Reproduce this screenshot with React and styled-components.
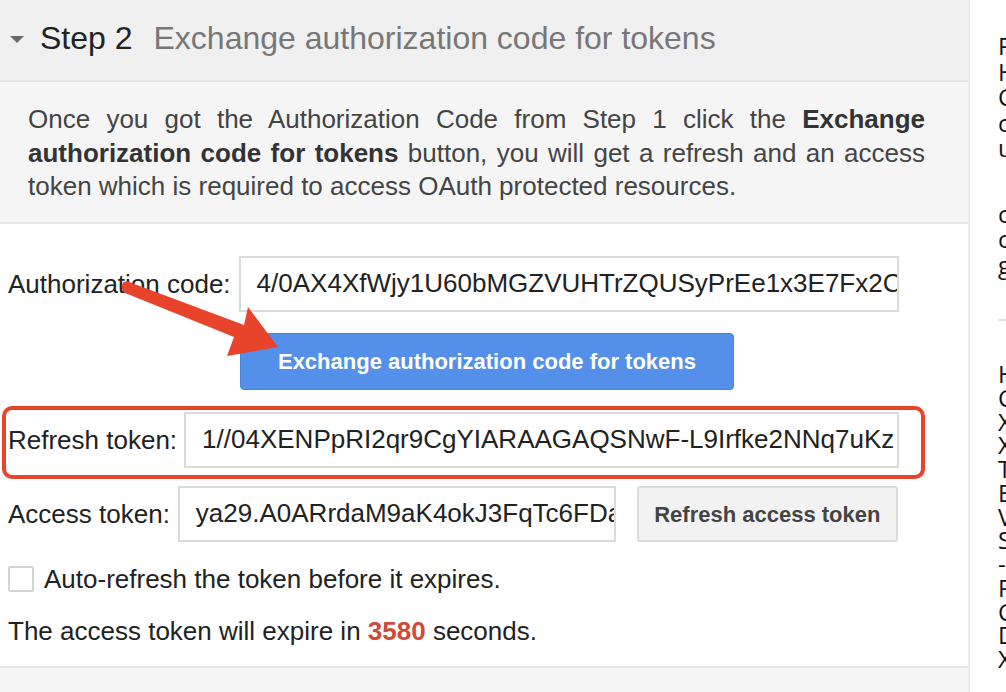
import React from "react";
import styled, { createGlobalStyle } from "styled-components";

const Global = createGlobalStyle`
  html, body { margin: 0; padding: 0; overflow: hidden; background: #fff; }
  body { font-family: "Liberation Sans", Arial, sans-serif; }
  * { box-sizing: border-box; }
`;

const Page = styled.div`
  display: flex;
  width: 1006px;
  height: 692px;
  overflow: hidden;
`;

const Main = styled.div`
  position: relative;
  flex: 0 0 968px;
  display: flex;
  flex-direction: column;
  background: #f5f5f5;
`;

const Header = styled.div`
  display: flex;
  align-items: center;
  height: 82px;
  padding: 0 0 4px 10px;
  background: #f0f0f0;
  border-bottom: 2px solid #e3e3e3;
`;

const Caret = styled.span`
  width: 0;
  height: 0;
  border-left: 7px solid transparent;
  border-right: 7px solid transparent;
  border-top: 7px solid #6a6a6a;
  margin-right: 16px;
  margin-top: 2px;
`;

const StepNo = styled.span`
  font-size: 32px;
  color: #222;
`;

const StepTitle = styled.span`
  font-size: 32px;
  color: #777;
  margin-left: 21px;
`;

const Description = styled.p`
  margin: 0;
  padding: 21px 43px 18px 28px;
  background: #f5f5f5;
  border-bottom: 2px solid #e6e6e6;
  font-size: 26px;
  line-height: 33.5px;
  color: #444;
  text-align: justify;
  b { color: #333; }
`;

const Content = styled.div`
  display: flex;
  flex-direction: column;
  align-items: flex-start;
  background: #fff;
  padding: 32px 0 0 8px;
  height: 444px;
  border-bottom: 2px solid #e3e3e3;
`;

const Row = styled.div`
  display: flex;
  align-items: center;
  gap: ${(p) => p.$gap || 10}px;
  margin-top: ${(p) => p.$mt || 0}px;
`;

const Label = styled.span`
  font-size: 26px;
  line-height: 30px;
  color: #222;
  white-space: nowrap;
`;

const TokenInput = styled.div`
  width: ${(p) => p.$w}px;
  height: 56px;
  border: 2px solid #dadada;
  background: #fff;
  padding-left: 16px;
  display: flex;
  align-items: center;
  font-size: 26px;
  color: #222;
  white-space: nowrap;
  overflow: hidden;
`;

const PrimaryButton = styled.button`
  display: block;
  margin: 21px 0 0 232px;
  width: 494px;
  height: 57px;
  background: #5490ea;
  border: 1px solid #4585e2;
  border-radius: 4px;
  color: #fff;
  font-family: "Liberation Sans", Arial, sans-serif;
  font-weight: bold;
  font-size: 22px;
  padding: 2px 0 0;
`;

const SecondaryButton = styled.button`
  width: 261px;
  height: 56px;
  margin-left: ${(p) => p.$ml || 0}px;
  background: #f2f2f2;
  border: 2px solid #dcdcdc;
  border-radius: 3px;
  color: #444;
  font-family: "Liberation Sans", Arial, sans-serif;
  font-weight: bold;
  font-size: 22px;
  padding: 2px 0 0;
`;

const Highlight = styled.div`
  position: relative;
  margin-top: 22px;
`;

const RedFrame = styled.div`
  position: absolute;
  left: -6px;
  top: -6px;
  width: 923px;
  height: 73px;
  border: 4px solid #e8442c;
  border-radius: 10px;
  pointer-events: none;
`;

const Checkbox = styled.span`
  flex: 0 0 26px;
  width: 26px;
  height: 26px;
  border: 2px solid #d4d4d4;
  border-radius: 2px;
  background: #fff;
`;

const Expire = styled.p`
  margin: 22px 0 0;
  font-size: 26px;
  line-height: 30px;
  color: #222;
  b { color: #d14a36; }
`;

const Arrow = styled.svg`
  position: absolute;
  left: 0;
  top: 0;
  pointer-events: none;
`;

const Sidebar = styled.div`
  flex: 1;
  border-left: 2px solid #ececec;
  padding: 33px 0 0 28px;
  font-family: "Open Sans", "Liberation Sans", sans-serif;
  font-size: 24px;
  color: #111;
  white-space: nowrap;
  overflow: hidden;
`;

const LogBlock = styled.div`
  line-height: ${(p) => p.$lh}px;
  margin-top: ${(p) => p.$mt || 0}px;
`;

const Divider = styled.div`
  height: 2px;
  background: #e2e2e2;
  margin-top: ${(p) => p.$mt}px;
  width: 40px;
`;

export default function App() {
  return (
    <>
      <Global />
      <Page>
        <Main>
          <Header>
            <Caret />
            <StepNo>Step 2</StepNo>
            <StepTitle>Exchange authorization code for tokens</StepTitle>
          </Header>
          <Description>
            Once you got the Authorization Code from Step 1 click the{" "}
            <b>Exchange authorization code for tokens</b> button, you will get a
            refresh and an access token which is required to access OAuth
            protected resources.
          </Description>
          <Content>
            <Row $gap={8}>
              <Label>Authorization code:</Label>
              <TokenInput $w={660}>4/0AX4XfWjy1U60bMGZVUHTrZQUSyPrEe1x3E7Fx2C</TokenInput>
            </Row>
            <PrimaryButton>Exchange authorization code for tokens</PrimaryButton>
            <Highlight>
              <Row $gap={7}>
                <Label>Refresh token:</Label>
                <TokenInput $w={715}>1//04XENPpRI2qr9CgYIARAAGAQSNwF-L9Irfke2NNq7uKz</TokenInput>
              </Row>
              <RedFrame />
            </Highlight>
            <Row $gap={8} $mt={18}>
              <Label>Access token:</Label>
              <TokenInput $w={438}>ya29.A0ARrdaM9aK4okJ3FqTc6FDa</TokenInput>
              <SecondaryButton $ml={13}>Refresh access token</SecondaryButton>
            </Row>
            <Row $gap={10} $mt={22}>
              <Checkbox />
              <Label>Auto-refresh the token before it expires.</Label>
            </Row>
            <Expire>
              The access token will expire in <b>3580</b> seconds.
            </Expire>
          </Content>
          <Arrow width="968" height="692" viewBox="0 0 968 692">
            <path
              d="M122 285 Q123 280 129 282 L244 325 L248 307 L278 347 L227 356 L234 337 L125 293 Q121 290 122 285 Z"
              fill="#e8442c"
            />
          </Arrow>
        </Main>
        <Sidebar>
          <LogBlock $lh={25.5}>
            <div>POST /token HTTP/1.1</div>
            <div>Host: oauth2.googleapis.com</div>
            <div>Content-length: 277</div>
            <div>content-type: application/x-www-form-urlencoded</div>
            <div>user-agent: google-oauth-playground</div>
          </LogBlock>
          <LogBlock $lh={25.5} $mt={40}>
            <div>code=4/0AX4XfWjy1U60bMGZVUHTrZQUSyPrEe1x3E7Fx2C</div>
            <div>client_id=407408718192.apps.googleusercontent.com</div>
            <div>grant_type=authorization_code</div>
          </LogBlock>
          <Divider $mt={42} />
          <LogBlock $lh={23.75} $mt={41}>
            <div>HTTP/1.1 200 OK</div>
            <div>Content-type: application/json; charset=utf-8</div>
            <div>X-xss-protection: 0</div>
            <div>X-content-type-options: nosniff</div>
            <div>Transfer-encoding: chunked</div>
            <div>Expires: Mon, 01 Jan 1990 00:00:00 GMT</div>
            <div>Vary: Origin, X-Origin, Referer</div>
            <div>Server: scaffolding on HTTPServer2</div>
            <div>-content-encoding: gzip</div>
            <div>Pragma: no-cache</div>
            <div>Cache-control: no-cache, no-store, max-age=0</div>
            <div>Date: Tue, 08 Mar 2022 03:12:44 GMT</div>
            <div>X-frame-options: SAMEORIGIN</div>
          </LogBlock>
        </Sidebar>
      </Page>
    </>
  );
}
